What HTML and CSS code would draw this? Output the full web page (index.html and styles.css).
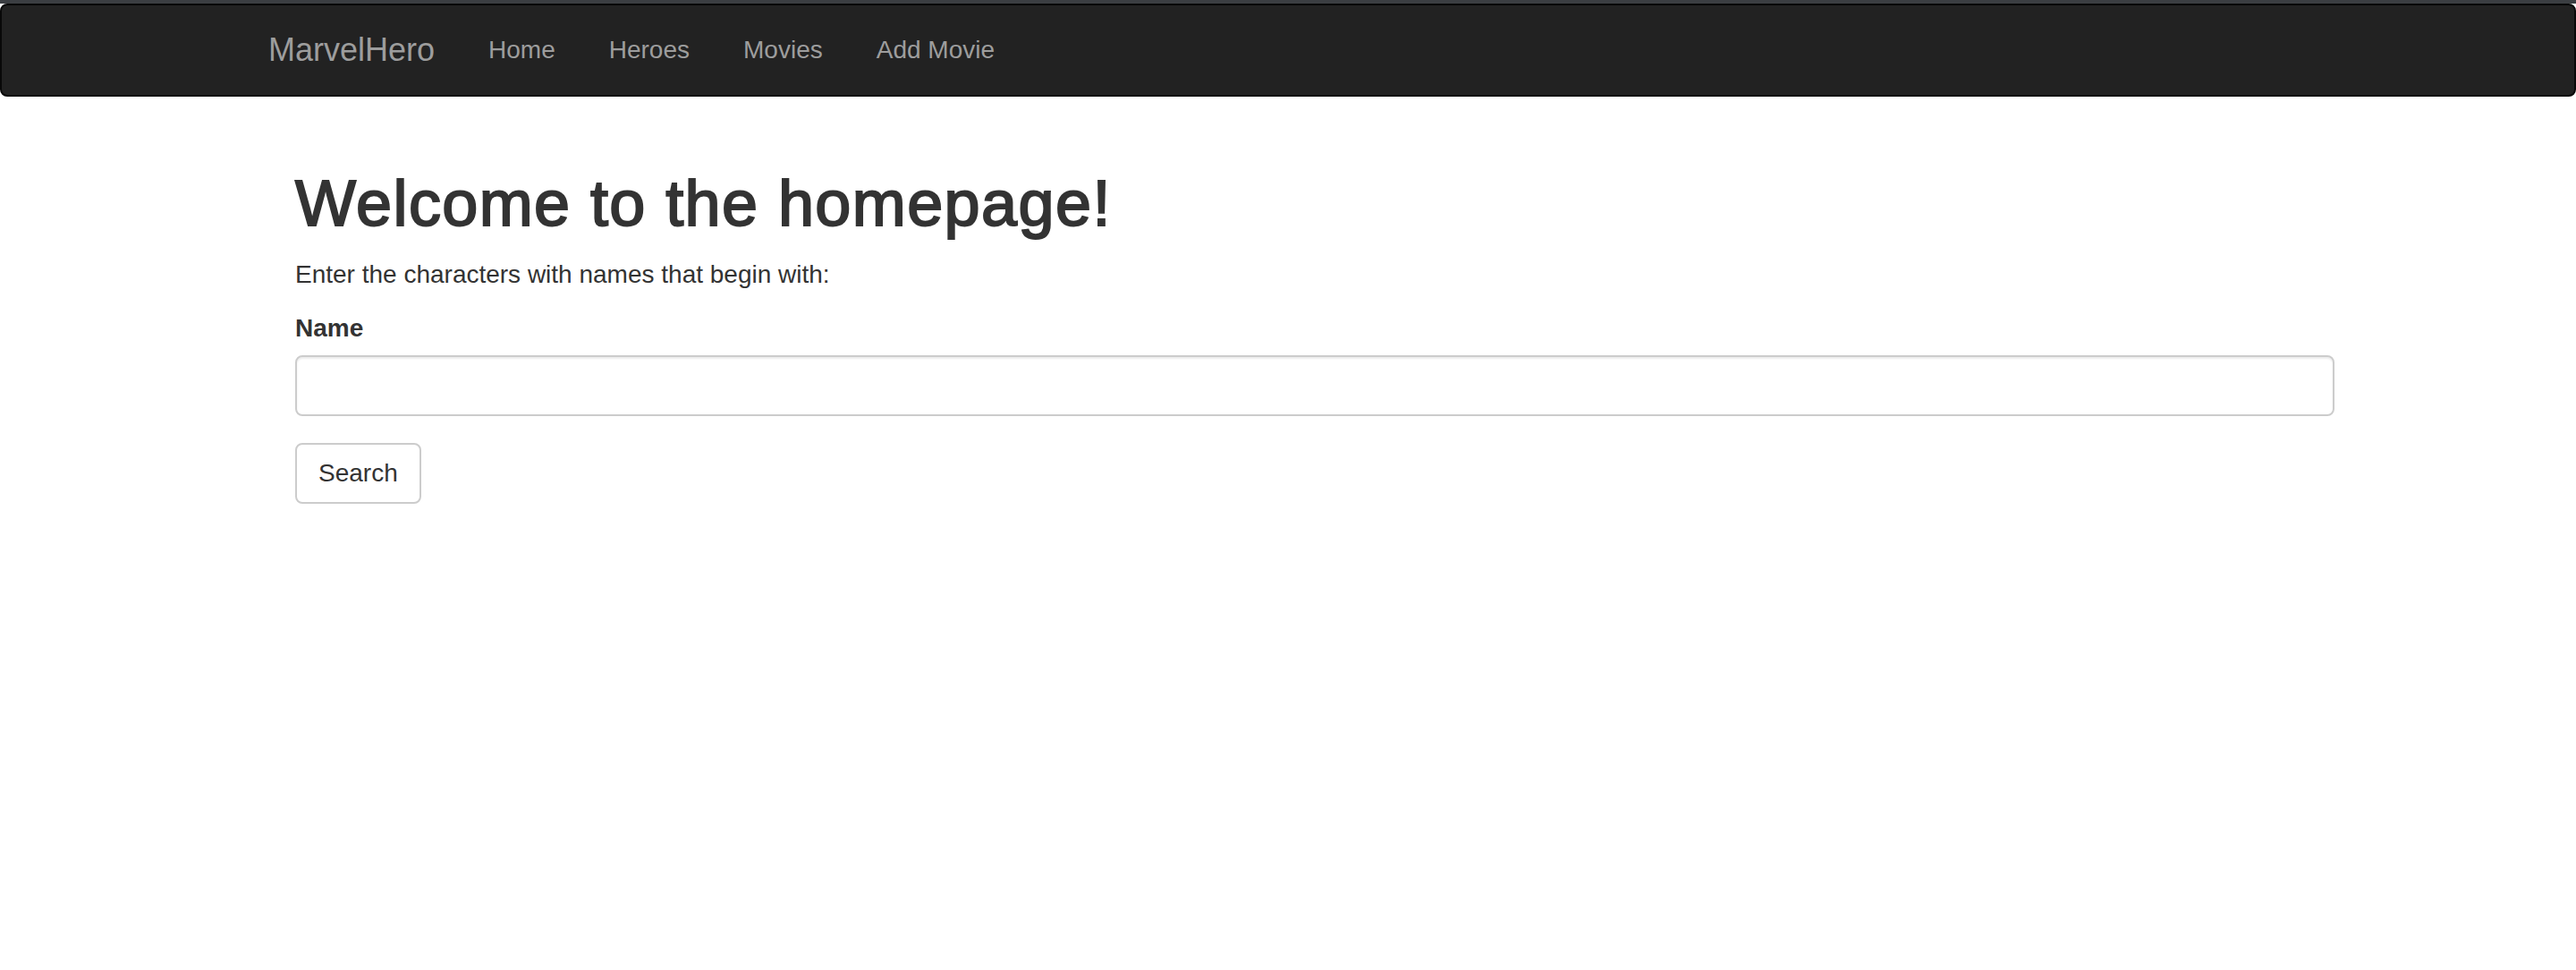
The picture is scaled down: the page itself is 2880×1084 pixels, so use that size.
FILE: index.html
```html
<!DOCTYPE html>
<html lang="en">
<head>
<meta charset="utf-8">
<title>MarvelHero</title>
<link rel="stylesheet" href="styles.css">
</head>
<body>
<div class="top-strip"></div>
<nav class="navbar">
  <div class="container nav-container">
    <a class="brand" href="#">MarvelHero</a>
    <ul class="nav">
      <li><a href="#">Home</a></li>
      <li><a href="#">Heroes</a></li>
      <li><a href="#">Movies</a></li>
      <li><a href="#">Add Movie</a></li>
    </ul>
  </div>
</nav>
<main class="container">
  <div class="content">
    <h1 class="title">Welcome to the homepage!</h1>
    <p class="lead-text">Enter the characters with names that begin with:</p>
    <form class="search-form">
      <div class="form-group">
        <label class="form-label" for="name">Name</label>
        <input class="form-control" id="name" type="text">
      </div>
      <button class="btn" type="button">Search</button>
    </form>
  </div>
</main>
</body>
</html>
```
FILE: styles.css
```css
* { box-sizing: border-box; }
html, body { margin: 0; padding: 0; background: #fff; }
body {
  font-family: "Liberation Sans", Arial, Helvetica, sans-serif;
  font-size: 28px;
  line-height: 40px;
  color: #333;
}
.top-strip { height: 4px; background: #3b3e42; }
.navbar {
  background: #222;
  border: 2px solid #080808;
  border-radius: 8px;
  min-height: 104px;
  margin-bottom: 40px;
}
.container { width: 2340px; margin: 0 auto; padding: 0 30px; display: flow-root; }
.nav-container { display: flex; align-items: stretch; }
.brand {
  display: block;
  margin-left: -30px;
  padding: 30px;
  height: 100px;
  font-size: 36px;
  line-height: 40px;
  color: #9d9d9d;
  text-decoration: none;
}
.nav { display: flex; list-style: none; margin: 0; padding: 0; }
.nav a {
  display: block;
  padding: 30px;
  line-height: 40px;
  color: #9d9d9d;
  text-decoration: none;
}
.content { margin: 0 -30px 0 30px; display: flow-root; }
.title {
  font-size: 72px;
  font-weight: 500;
  line-height: 1.1;
  letter-spacing: 1.4px;
  -webkit-text-stroke: 2px #333;
  margin: 40px 0 20px;
  color: #333;
}
.lead-text { margin: 0 0 20px; }
.form-group { margin-bottom: 30px; }
.form-label {
  display: inline-block;
  font-weight: 700;
  margin-bottom: 10px;
}
.form-control {
  display: block;
  width: 100%;
  height: 68px;
  padding: 12px 24px;
  font: inherit;
  color: #555;
  background: #fff;
  border: 2px solid #ccc;
  border-radius: 8px;
  box-shadow: inset 0 2px 2px rgba(0,0,0,.075);
  outline: none;
}
.btn {
  display: inline-block;
  height: 68px;
  padding: 12px 24px;
  font: inherit;
  color: #333;
  background: #fff;
  border: 2px solid #ccc;
  border-radius: 8px;
  cursor: pointer;
}
```
